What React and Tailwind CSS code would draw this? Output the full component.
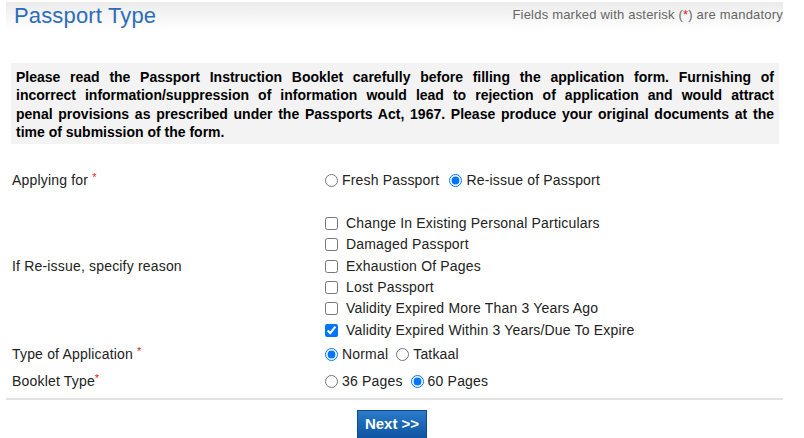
import React, { useState } from 'react';

const reasons = [
	'Change In Existing Personal Particulars',
	'Damaged Passport',
	'Exhaustion Of Pages',
	'Lost Passport',
	'Validity Expired More Than 3 Years Ago',
	'Validity Expired Within 3 Years/Due To Expire',
];

// the booklet notice, one entry per printed line so the justify breaks land where the page has them
const notice = [
	'Please read the Passport Instruction Booklet carefully before filling the application form. Furnishing of',
	'incorrect information/suppression of information would lead to rejection of application and would attract',
	'penal provisions as prescribed under the Passports Act, 1967. Please produce your original documents at the',
];

function Star() {
	return <span className="text-[#e21a1a] text-[11px] align-top relative top-[-1px]">*</span>;
}

export default function App() {
	const [applying, setApplying] = useState('reissue');
	const [checked, setChecked] = useState([5]);
	const [appType, setAppType] = useState('normal');
	const [booklet, setBooklet] = useState('60');

	const toggle = i => {
		setChecked(checked.includes(i) ? checked.filter(c => c !== i) : [...checked, i]);
	};

	return (
		<div className="w-[804px] h-[438px] overflow-hidden bg-white text-[#222] font-['Liberation_Sans',Arial,sans-serif]">
			{/* header bar */}
			<div className="mx-[6px] mt-[2px] w-[777px] h-[28px] flex items-center justify-between pl-[8px] bg-gradient-to-b from-[#ebebeb] to-white">
				<h1 className="text-[22px] leading-[28px] text-[#2d6db8] tracking-[0.15px]">Passport Type</h1>
				<p className="text-[13px] text-[#666] leading-[28px] pb-[2px] tracking-[0.2px]">
					Fields marked with asterisk (<span className="text-[#e21a1a]">*</span>) are mandatory
				</p>
			</div>

			{/* instruction box */}
			<div className="mx-[11px] mt-[33px] w-[768px] bg-[#f3f3f3] px-[5px] pt-[5px] pb-[2px]">
				<div className="text-[14px] font-bold leading-[18.4px] text-black">
					{notice.map((line, i) => (
						<p key={i} className="text-justify [text-align-last:justify]">
							{line}
						</p>
					))}
					<p>time of submission of the form.</p>
				</div>
			</div>

			{/* form rows */}
			<div className="mt-[25px] text-[14px] tracking-[0.18px]">
				<div className="flex h-[24px] items-center">
					<div className="w-[325px] pl-[12px]">
						Applying for <Star />
					</div>
					<label className="flex items-center">
						<input type="radio" className="m-0 w-[13px] h-[13px]" checked={applying === 'fresh'} onChange={() => setApplying('fresh')} />
						<span className="ml-[4px]">Fresh Passport</span>
					</label>
					<label className="flex items-center ml-[10px]">
						<input type="radio" className="m-0 w-[13px] h-[13px]" checked={applying === 'reissue'} onChange={() => setApplying('reissue')} />
						<span className="ml-[4px]">Re-issue of Passport</span>
					</label>
				</div>

				<div className="flex items-center pt-[21px] pb-[1px] mt-[-1px]">
					<div className="w-[325px] pl-[12px] self-stretch flex items-center -mt-[21px]">If Re-issue, specify reason</div>
					<div className="flex flex-col">
						{reasons.map((r, i) => (
							<label key={i} className="flex items-center h-[21.4px]">
								<input type="checkbox" className="m-0 w-[13px] h-[13px]" checked={checked.includes(i)} onChange={() => toggle(i)} />
								<span className="ml-[8px]">{r}</span>
							</label>
						))}
					</div>
				</div>

				<div className="flex h-[26px] items-center">
					<div className="w-[325px] pl-[12px]">
						Type of Application <Star />
					</div>
					<label className="flex items-center">
						<input type="radio" className="m-0 w-[13px] h-[13px]" checked={appType === 'normal'} onChange={() => setAppType('normal')} />
						<span className="ml-[4px]">Normal</span>
					</label>
					<label className="flex items-center ml-[8px]">
						<input type="radio" className="m-0 w-[13px] h-[13px]" checked={appType === 'tatkaal'} onChange={() => setAppType('tatkaal')} />
						<span className="ml-[4px]">Tatkaal</span>
					</label>
				</div>

				<div className="flex h-[28px] items-center">
					<div className="w-[325px] pl-[12px]">
						Booklet Type<Star />
					</div>
					<label className="flex items-center">
						<input type="radio" className="m-0 w-[13px] h-[13px]" checked={booklet === '36'} onChange={() => setBooklet('36')} />
						<span className="ml-[4px]">36 Pages</span>
					</label>
					<label className="flex items-center ml-[8px]">
						<input type="radio" className="m-0 w-[13px] h-[13px]" checked={booklet === '60'} onChange={() => setBooklet('60')} />
						<span className="ml-[4px]">60 Pages</span>
					</label>
				</div>
			</div>

			<div className="mx-[6px] mt-[2px] w-[777px] h-[2px] bg-[#e2e2e2]" />

			{/* next button */}
			<div className="pl-[357px] pt-[10px]">
				<button className="w-[70px] h-[32px] bg-gradient-to-b from-[#2a7cc9] to-[#0b4f9e] border border-[#0a4a92] text-white font-bold text-[15px] pb-[4px]">
					Next &gt;&gt;
				</button>
			</div>
		</div>
	);
}
